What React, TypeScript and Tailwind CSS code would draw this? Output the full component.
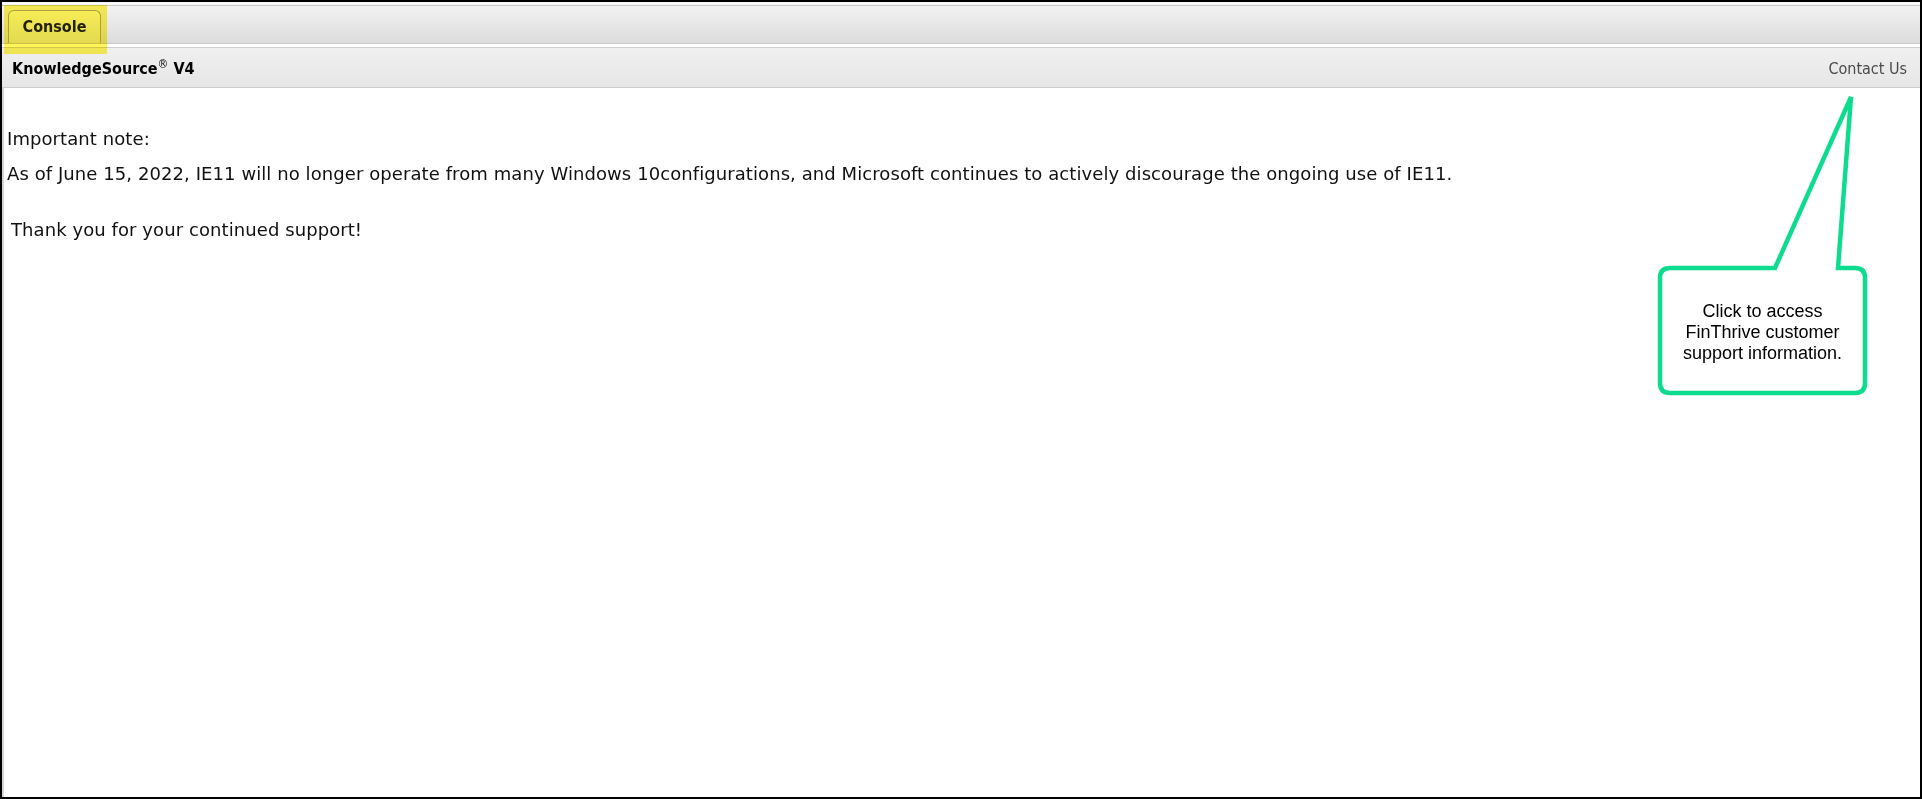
// Console landing page with the "Contact Us" callout annotation

export default function App() {
  return (
    <div className="relative flex h-[799px] w-[1922px] flex-col overflow-hidden border-2 border-black bg-white font-['DejaVu_Sans_Condensed','Liberation_Sans',sans-serif]">
      {/* tab strip */}
      <div className="h-[3px] bg-[#f7f7f7]" />
      <div className="flex h-[39px] items-end border-y border-[#c9c9c9] bg-gradient-to-b from-[#f2f2f2] to-[#dcdcdc] pl-[6px]">
        <div className="flex h-[33px] w-[93px] items-center justify-center rounded-t-[6px] border border-b-0 border-[#a9a9a9] bg-gradient-to-b from-[#f7f7f7] to-[#e2e2e2] text-[16px] font-bold text-[#222]">
          Console
        </div>
      </div>
      <div className="h-[4px] border-b border-[#cfcfcf] bg-white" />

      {/* product header */}
      <div className="flex h-[40px] items-center justify-between border-b border-[#cccccc] bg-gradient-to-b from-[#f0f0f0] to-[#e6e6e6] pl-[10px] pr-[13px] pt-[3px]">
        <div className="text-[16px] font-bold text-black">
          KnowledgeSource<sup className="text-[12px] font-normal">®</sup> V4
        </div>
        <a className="text-[16px] text-[#4a4a4a]">Contact Us</a>
      </div>

      {/* notice */}
      <div className="flex-1 border-l-[2px] border-[#d4d4d4] pl-[3px] pt-[33px] font-['DejaVu_Sans',sans-serif] text-[18px] tracking-[0.08px] text-[#111]">
        <p className="leading-[35px]">Important note:</p>
        <p className="leading-[35px]">
          As of June 15, 2022, IE11 will no longer operate from many Windows 10configurations, and Microsoft continues to
          actively discourage the ongoing use of IE11.
        </p>
        <p className="mt-[21px] pl-[4px] leading-[35px]">Thank you for your continued support!</p>
      </div>

      {/* yellow highlight on the tab */}
      <div className="pointer-events-none absolute left-[2px] top-[3px] h-[49px] w-[103px] bg-[#fff000]/65 mix-blend-multiply" />

      {/* callout */}
      <svg className="absolute left-[1648px] top-[88px]" width="230" height="310" viewBox="0 0 230 310">
        <path
          d="M201 7 L188 178 L205 178 Q215 178 215 188 L215 293 Q215 303 205 303 L20 303 Q10 303 10 293 L10 188 Q10 178 20 178 L125 178 Z"
          fill="white"
          stroke="#0ddc8e"
          strokeWidth="4.5"
          strokeLinejoin="miter"
        />
      </svg>
      <div className="absolute left-[1658px] top-[268px] flex h-[125px] w-[205px] items-center justify-center text-center font-['Liberation_Sans',Arial,sans-serif] text-[18px] leading-[21px] text-black">
        Click to access
        <br />
        FinThrive customer
        <br />
        support information.
      </div>
    </div>
  );
}
